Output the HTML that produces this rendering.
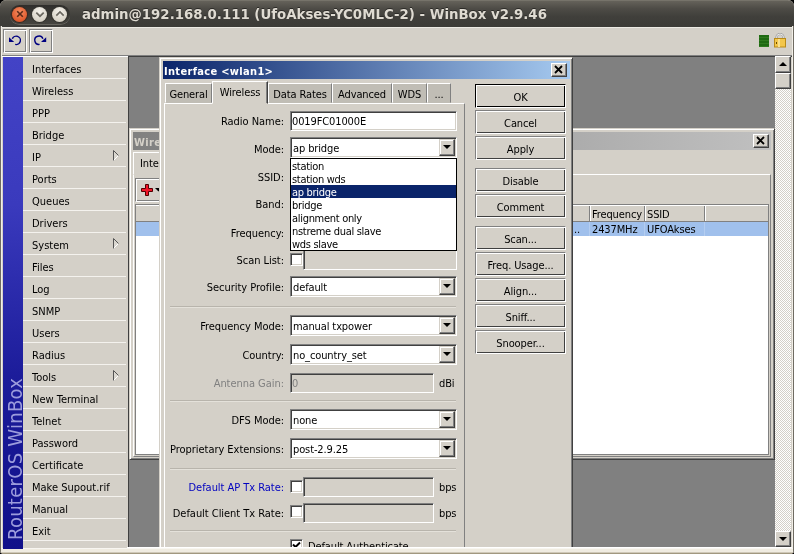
<!DOCTYPE html>
<html><head><meta charset="utf-8"><title>WinBox</title>
<style>
*{box-sizing:border-box;margin:0;padding:0}
html,body{width:794px;height:554px;overflow:hidden;background:#000}
#w{position:absolute;left:0;top:0;width:794px;height:554px;overflow:hidden;will-change:transform;border-radius:6px 6px 4px 4px;background:#d4d0c8}
body{position:relative;font-family:"DejaVu Sans Condensed","Liberation Sans",sans-serif;font-size:11px;color:#000;line-height:13px;letter-spacing:-0.12px}
.a{position:absolute}
.t{position:absolute;white-space:nowrap}
/* title bar */
#tb{left:0;top:0;width:794px;height:27px;background:linear-gradient(#65625a 0,#4d4b46 30%,#403f3b 60%,#3c3b37 100%);border-top:1px solid #76736a}
#tb .pill{left:10px;top:4px;width:60px;height:19px;border-radius:10px;background:linear-gradient(#2f2e2b,#45443f);box-shadow:0 1px 0 #66645d}
.wb{position:absolute;width:15px;height:15px;border-radius:50%;top:6px}
#tt{left:82px;top:5px;letter-spacing:0;font-family:"DejaVu Sans","Liberation Sans",sans-serif;font-weight:bold;font-size:13.33px;line-height:18px;color:#dfdbd2;text-shadow:0 -1px 0 #2b2a27}
/* generic win classic */
.btn{position:absolute;background:#d4d0c8;border:1px solid;border-color:#fff #404040 #404040 #fff;box-shadow:inset -1px -1px 0 #808080,inset 1px 1px 0 #d4d0c8;text-align:center}
.sunk{position:absolute;border:1px solid;border-color:#808080 #fff #fff #808080;box-shadow:inset 1px 1px 0 #404040,inset -1px -1px 0 #d4d0c8;background:#fff}
.sunk.dis{background:#d4d0c8}
.lbl{position:absolute;white-space:nowrap;text-align:right;width:140px;left:144px;letter-spacing:-0.04px;height:13px}
.dd{position:absolute;width:16px;height:17px;right:1px;top:1px;background:#d4d0c8;border:1px solid;border-color:#d4d0c8 #404040 #404040 #d4d0c8;box-shadow:inset -1px -1px 0 #808080,inset 1px 1px 0 #fff}
.dd:after{content:"";position:absolute;left:3px;top:5px;border:4px solid transparent;border-top:4px solid #000;border-bottom:0}
.val{position:absolute;left:2px;top:4px;white-space:nowrap}
.sep{position:absolute;left:170px;width:286px;height:2px;border-top:1px solid #b8b4ac;border-bottom:1px solid #e4e1da}
.cb{position:absolute;width:13px;height:13px;border:1px solid;border-color:#808080 #fff #fff #808080;box-shadow:inset 1px 1px 0 #404040,inset -1px -1px 0 #d4d0c8;background:#fff}
.mi{position:absolute;left:23px;width:103px;height:22px;border-bottom:1px solid #f4f2ee;padding:6px 0 0 9px;letter-spacing:0}
.arr{position:absolute;left:89px;top:5px;width:0;height:0;border:5px solid transparent;border-left:5px solid #fff;border-right:0}
.tab{position:absolute;top:83px;height:20px;background:#c0bdb5;border:1px solid;border-color:#fff #808080 transparent #fff;text-align:center;padding-top:4px}
.win{background:#d4d0c8;border:1px solid;border-color:#d4d0c8 #404040 #404040 #d4d0c8;box-shadow:inset 1px 1px 0 #fff,inset -1px -1px 0 #808080}
.hc{top:79px;height:15px;background:#808080;box-shadow:1px 0 0 #fff}
.eb{position:absolute;border:1px solid;border-color:#808080 #fff #fff #808080;box-shadow:inset 1px 1px 0 #fff,inset -1px -1px 0 #404040;text-align:center}
.eb.def{border-color:#000 #fff #fff #000;box-shadow:inset 1px 1px 0 #fff,inset -1px -1px 0 #000}
.tbb{position:absolute;border:1px solid;border-color:#808080 #fff #fff #808080;box-shadow:inset 1px 1px 0 #fff,inset -1px -1px 0 #808080}
</style></head><body><div id="w">

<!-- Title bar -->
<div id="tb" class="a">
  <div class="a pill"></div>
  <div class="wb" style="left:12px;background:radial-gradient(circle at 50% 35%,#f58d62,#df5a2d 70%,#b8441f);box-shadow:0 0 0 1px #3a2a22"></div>
  <div class="wb" style="left:32px;background:radial-gradient(circle at 50% 30%,#f4f1ea,#d7d2c6 75%,#b9b4a8);box-shadow:0 0 0 1px #35342f"></div>
  <div class="wb" style="left:52px;background:radial-gradient(circle at 50% 30%,#f4f1ea,#d7d2c6 75%,#b9b4a8);box-shadow:0 0 0 1px #35342f"></div>
  <svg class="a" style="left:0;top:-1px" width="80" height="26" viewBox="0 0 80 26">
    <path d="M17.2 11.2l5.6 5.6M22.8 11.2l-5.6 5.6" stroke="#5a2a18" stroke-width="1.6" fill="none"/>
    <path d="M36.3 12.6l3.7 3.6 3.7-3.6" stroke="#6a675f" stroke-width="1.7" fill="none"/>
    <path d="M56.3 15.6l3.7-3.6 3.7 3.6" stroke="#6a675f" stroke-width="1.7" fill="none"/>
  </svg>
  <div id="tt" class="t">admin@192.168.0.111 (UfoAkses-YC0MLC-2) - WinBox v2.9.46</div>
</div>

<div class="a" style="left:1px;top:27px;width:792px;height:1px;background:#eceae4"></div>
<!-- window side borders -->
<div class="a" style="left:0;top:26px;width:1px;height:528px;background:#6f6b62"></div>
<div class="a" style="left:1px;top:26px;width:1px;height:522px;background:#f2efe8"></div>
<div class="a" style="left:793px;top:26px;width:1px;height:528px;background:#6f6b62"></div>
<div class="a" style="left:792px;top:26px;width:1px;height:522px;background:#f2efe8"></div>

<!-- toolbar -->
<div class="tbb" style="left:3px;top:29px;width:24px;height:24px"></div>
<div class="tbb" style="left:29px;top:29px;width:24px;height:24px"></div>
<svg class="a" style="left:0;top:26px" width="60" height="30" viewBox="0 26 60 30">
  <g fill="none" stroke="#000080" stroke-width="1.4">
    <path d="M12.300 38.800A4.200 4.200 0 1 1 15.200 44.400"/>
    <path d="M42.900 38.800A4.200 4.200 0 1 0 39.600 44.400"/>
  </g>
  <path d="M9 37.300v4.700h5.200z" fill="#000080"/>
  <path d="M46.200 37.300v4.700h-5.200z" fill="#000080"/>
</svg>
<!-- status icons -->
<div class="a" style="left:759px;top:35px;width:10px;height:12px;background:repeating-linear-gradient(#1f6a12 0,#1f6a12 2px,#2f7a1e 2px,#2f7a1e 3px)"></div>
<svg class="a" style="left:773px;top:32px" width="14" height="16" viewBox="0 0 14 16">
  <path d="M3.500 7V5.500a3.500 3.500 0 0 1 7 0V7" fill="none" stroke="#9a9a9a" stroke-width="2.200"/>
  <path d="M3.500 7V5.500a3.500 3.500 0 0 1 7 0V7" fill="none" stroke="#f2f2f2" stroke-width="0.900"/>
  <rect x="1.500" y="6.500" width="11" height="8.500" fill="#f3c64a" stroke="#b88a18"/>
  <rect x="5" y="7" width="2" height="8" fill="#f9e08c"/>
  <rect x="3" y="10" width="1" height="2" fill="#6b4a00"/>
</svg>

<!-- MDI frame -->
<div class="a" style="left:2px;top:55px;width:790px;height:1px;background:#808080"></div>
<div class="a" style="left:128px;top:56px;width:664px;height:1px;background:#404040"></div>
<div class="a" style="left:2px;top:56px;width:126px;height:1px;background:#fff"></div>
<div class="a" style="left:128px;top:56px;width:1px;height:491px;background:#404040"></div>

<!-- sidebar -->
<div class="a" style="left:3px;top:57px;width:20px;height:492px;background:linear-gradient(#4343c6 0,#3a3abd 30%,#1c1c9a 65%,#10108a 100%);overflow:hidden">
  <div class="t" style="left:0;top:0;width:492px;height:20px;transform-origin:0 0;transform:translate(1.5px,492px) rotate(-90deg);font-family:'DejaVu Sans Condensed','Liberation Sans',sans-serif;font-size:20px;letter-spacing:0.28px;line-height:20px;color:#9c9cdc;padding-left:9px">RouterOS WinBox</div>
</div>
<div class="mi" style="top:57px">Interfaces</div>
<div class="mi" style="top:79px">Wireless</div>
<div class="mi" style="top:101px">PPP</div>
<div class="mi" style="top:123px">Bridge</div>
<div class="mi" style="top:145px">IP<svg class="a" style="left:89px;top:4px" width="8" height="12"><path d="M1.500 1.500L6.500 6.500L1.500 11.500z" fill="#dad7d0"/><path d="M1.500 11.500L6.500 6.500" stroke="#fff" stroke-width="1" fill="none"/><path d="M1.500 11.500V1.500L6.500 6.500" stroke="#555" stroke-width="1" fill="none"/></svg></div>
<div class="mi" style="top:167px">Ports</div>
<div class="mi" style="top:189px">Queues</div>
<div class="mi" style="top:211px">Drivers</div>
<div class="mi" style="top:233px">System<svg class="a" style="left:89px;top:4px" width="8" height="12"><path d="M1.500 1.500L6.500 6.500L1.500 11.500z" fill="#dad7d0"/><path d="M1.500 11.500L6.500 6.500" stroke="#fff" stroke-width="1" fill="none"/><path d="M1.500 11.500V1.500L6.500 6.500" stroke="#555" stroke-width="1" fill="none"/></svg></div>
<div class="mi" style="top:255px">Files</div>
<div class="mi" style="top:277px">Log</div>
<div class="mi" style="top:299px">SNMP</div>
<div class="mi" style="top:321px">Users</div>
<div class="mi" style="top:343px">Radius</div>
<div class="mi" style="top:365px">Tools<svg class="a" style="left:89px;top:4px" width="8" height="12"><path d="M1.500 1.500L6.500 6.500L1.500 11.500z" fill="#dad7d0"/><path d="M1.500 11.500L6.500 6.500" stroke="#fff" stroke-width="1" fill="none"/><path d="M1.500 11.500V1.500L6.500 6.500" stroke="#555" stroke-width="1" fill="none"/></svg></div>
<div class="mi" style="top:387px">New Terminal</div>
<div class="mi" style="top:409px">Telnet</div>
<div class="mi" style="top:431px">Password</div>
<div class="mi" style="top:453px">Certificate</div>
<div class="mi" style="top:475px">Make Supout.rif</div>
<div class="mi" style="top:497px">Manual</div>
<div class="mi" style="top:519px">Exit</div>

<!-- MDI area -->
<div class="a" id="mdi" style="left:129px;top:57px;width:646px;height:490px;background:#808080;overflow:hidden">
<div class="a" style="left:-129px;top:-57px;width:794px;height:700px">
<div class="a win" style="left:129px;top:128px;width:646px;height:332px"></div>
<div class="a" style="left:133px;top:132px;width:638px;height:18px;background:linear-gradient(90deg,#808080,#c0c0c0)"></div>
<div class="t" style="left:134px;top:136px;font-weight:bold;color:#d4d0c8;letter-spacing:0.32px">Wireless Tables</div>
<div class="btn" style="left:753px;top:134px;width:16px;height:14px"></div>
<svg class="a" style="left:753px;top:134px" width="16" height="14"><path d="M4 3l7 7M11 3l-7 7" stroke="#000" stroke-width="1.8" fill="none"/></svg>
<div class="a" style="left:133px;top:174px;width:638px;height:283px;border:1px solid;border-color:#fff #808080 #808080 #fff"></div>
<div class="a" style="left:133px;top:152px;width:66px;height:23px;background:#d4d0c8;border:1px solid;border-color:#fff #404040 transparent #fff"></div>
<div class="t" style="left:140px;top:157px">Interfaces</div>
<div class="tbb" style="left:135px;top:178px;width:38px;height:24px"></div>
<svg class="a" style="left:141px;top:184px" width="22" height="12"><path d="M4.500 0.500h3v4h4v3h-4v4h-3v-4h-4v-3h4z" fill="#f01428" stroke="#500000" stroke-width="1"/><path d="M14 4h7l-3.500 3.500z" fill="#000"/></svg>
<div class="a" style="left:135px;top:204px;width:634px;height:251px;background:#fff;border:1px solid #808080"></div>
<div class="a" style="left:136px;top:205px;width:632px;height:17px;background:#d4d0c8;border-top:1px solid #fff;border-bottom:1px solid #808080"></div>
<div class="a" style="left:136px;top:222px;width:632px;height:14px;background:#a0c0ec"></div>
<div class="a" style="left:589px;top:206px;width:2px;height:15px;background:#808080;border-right:1px solid #fff"></div>
<div class="a" style="left:589px;top:222px;width:1px;height:14px;background:#b4cdf0"></div>
<div class="a" style="left:644px;top:206px;width:2px;height:15px;background:#808080;border-right:1px solid #fff"></div>
<div class="a" style="left:644px;top:222px;width:1px;height:14px;background:#b4cdf0"></div>
<div class="a" style="left:704px;top:206px;width:2px;height:15px;background:#808080;border-right:1px solid #fff"></div>
<div class="a" style="left:704px;top:222px;width:1px;height:14px;background:#b4cdf0"></div>
<div class="t" style="left:592px;top:208px">Frequency</div>
<div class="t" style="left:647px;top:208px">SSID</div>
<div class="t" style="left:574px;top:223px">..</div>
<div class="t" style="left:592px;top:223px">2437MHz</div>
<div class="t" style="left:647px;top:223px">UFOAkses</div>
<div class="a win" style="left:159px;top:57px;width:414px;height:620px">
 <div class="a" style="left:3px;top:3px;width:407px;height:18px;background:linear-gradient(90deg,#0a246a,#a6caf0)"></div>
 <div class="t" style="left:4px;top:7px;font-weight:bold;color:#fff;letter-spacing:0.32px">Interface &lt;wlan1&gt;</div>
 <div class="btn" style="left:391px;top:5px;width:16px;height:14px"></div>
 <svg class="a" style="left:391px;top:5px" width="16" height="14"><path d="M4 3l7 7M11 3l-7 7" stroke="#000" stroke-width="1.8" fill="none"/></svg>
</div>
<div class="a" style="left:164px;top:103px;width:301px;height:560px;border:1px solid;border-color:#fff #808080 #808080 #fff"></div>
<div class="tab" style="left:165px;width:47px">General</div>
<div class="tab" style="left:268px;width:64px">Data Rates</div>
<div class="tab" style="left:332px;width:60px">Advanced</div>
<div class="tab" style="left:392px;width:35px">WDS</div>
<div class="tab" style="left:427px;width:24px">...</div>
<div class="a" style="left:212px;top:81px;width:56px;height:23px;background:#d4d0c8;border:1px solid;border-color:#fff #404040 transparent #fff;box-shadow:inset -1px 0 0 #808080;text-align:center;padding-top:4px">Wireless</div>
<div class="lbl" style="top:115px;color:#000">Radio Name:</div>
<div class="sunk" style="left:290px;top:111px;width:167px;height:20px"><span class="val" style="left:1px;top:3px;color:#000">0019FC01000E</span></div>
<div class="lbl" style="top:143px;color:#000">Mode:</div>
<div class="sunk" style="left:290px;top:137px;width:167px;height:21px"><span class="val">ap bridge</span><i class="dd"></i></div>
<div class="lbl" style="top:171px;color:#000">SSID:</div>
<div class="lbl" style="top:198px;color:#000">Band:</div>
<div class="lbl" style="top:227px;color:#000">Frequency:</div>
<div class="lbl" style="top:254px;color:#000">Scan List:</div>
<div class="cb" style="left:290px;top:253px"></div>
<div class="sunk dis" style="left:303px;top:249px;width:154px;height:21px"><span class="val" style="left:1px;top:3px;color:#000"></span></div>
<div class="lbl" style="top:281px;color:#000">Security Profile:</div>
<div class="sunk" style="left:290px;top:276px;width:167px;height:21px"><span class="val">default</span><i class="dd"></i></div>
<div class="sep" style="top:306px"></div>
<div class="lbl" style="top:320px;color:#000">Frequency Mode:</div>
<div class="sunk" style="left:290px;top:315px;width:167px;height:21px"><span class="val">manual txpower</span><i class="dd"></i></div>
<div class="lbl" style="top:349px;color:#000">Country:</div>
<div class="sunk" style="left:290px;top:344px;width:167px;height:21px"><span class="val">no_country_set</span><i class="dd"></i></div>
<div class="lbl" style="top:377px;color:#808080">Antenna Gain:</div>
<div class="sunk dis" style="left:290px;top:373px;width:144px;height:20px"><span class="val" style="left:1px;top:3px;color:#808080">0</span></div>
<div class="t" style="left:439px;top:377px">dBi</div>
<div class="sep" style="top:400px"></div>
<div class="lbl" style="top:414px;color:#000">DFS Mode:</div>
<div class="sunk" style="left:290px;top:409px;width:167px;height:21px"><span class="val">none</span><i class="dd"></i></div>
<div class="lbl" style="top:443px;color:#000">Proprietary Extensions:</div>
<div class="sunk" style="left:290px;top:438px;width:167px;height:21px"><span class="val">post-2.9.25</span><i class="dd"></i></div>
<div class="sep" style="top:468px"></div>
<div class="lbl" style="top:481px;color:#0000c0">Default AP Tx Rate:</div>
<div class="cb" style="left:290px;top:480px"></div>
<div class="sunk dis" style="left:303px;top:477px;width:131px;height:20px"><span class="val" style="left:1px;top:3px;color:#000"></span></div>
<div class="t" style="left:439px;top:481px">bps</div>
<div class="lbl" style="top:507px;color:#000">Default Client Tx Rate:</div>
<div class="cb" style="left:290px;top:505px"></div>
<div class="sunk dis" style="left:303px;top:503px;width:131px;height:20px"><span class="val" style="left:1px;top:3px;color:#000"></span></div>
<div class="t" style="left:439px;top:507px">bps</div>
<div class="sep" style="top:530px"></div>
<div class="cb" style="left:290px;top:539px"><svg class="a" style="left:1px;top:1px" width="9" height="9"><path d="M1 3.5l2.5 2.5 4.5-4.500" stroke="#000" stroke-width="2" fill="none"/></svg></div>
<div class="t" style="left:308px;top:540px">Default Authenticate</div>
<div class="a" style="left:290px;top:158px;width:167px;height:93px;background:#fff;border:1px solid #000"></div>
<div class="a" style="left:291px;top:159px;width:165px;height:13px;padding:1px 0 0 1px;overflow:hidden;letter-spacing:-0.3px">station</div>
<div class="a" style="left:291px;top:172px;width:165px;height:13px;padding:1px 0 0 1px;overflow:hidden;letter-spacing:-0.3px">station wds</div>
<div class="a" style="left:291px;top:185px;width:165px;height:13px;background:#0a246a;color:#fff;padding:1px 0 0 1px;overflow:hidden;letter-spacing:-0.3px">ap bridge</div>
<div class="a" style="left:291px;top:198px;width:165px;height:13px;padding:1px 0 0 1px;overflow:hidden;letter-spacing:-0.3px">bridge</div>
<div class="a" style="left:291px;top:211px;width:165px;height:13px;padding:1px 0 0 1px;overflow:hidden;letter-spacing:-0.3px">alignment only</div>
<div class="a" style="left:291px;top:224px;width:165px;height:13px;padding:1px 0 0 1px;overflow:hidden;letter-spacing:-0.3px">nstreme dual slave</div>
<div class="a" style="left:291px;top:237px;width:165px;height:13px;padding:1px 0 0 1px;overflow:hidden;letter-spacing:-0.3px">wds slave</div>
<div class="eb def" style="left:475px;top:84px;width:91px;height:24px;padding-top:6px">OK</div>
<div class="eb" style="left:475px;top:110px;width:91px;height:24px;padding-top:6px">Cancel</div>
<div class="eb" style="left:475px;top:136px;width:91px;height:24px;padding-top:6px">Apply</div>
<div class="eb" style="left:475px;top:168px;width:91px;height:24px;padding-top:6px">Disable</div>
<div class="eb" style="left:475px;top:194px;width:91px;height:24px;padding-top:6px">Comment</div>
<div class="eb" style="left:475px;top:226px;width:91px;height:24px;padding-top:6px">Scan...</div>
<div class="eb" style="left:475px;top:252px;width:91px;height:24px;padding-top:6px">Freq. Usage...</div>
<div class="eb" style="left:475px;top:278px;width:91px;height:24px;padding-top:6px">Align...</div>
<div class="eb" style="left:475px;top:304px;width:91px;height:24px;padding-top:6px">Sniff...</div>
<div class="eb" style="left:475px;top:330px;width:91px;height:24px;padding-top:6px">Snooper...</div>
</div>
</div>

<!-- scrollbar -->
<div class="a" style="left:775px;top:57px;width:16px;height:490px;background:repeating-conic-gradient(#fff 0 25%,#d4d0c8 0 50%) 0 0/2px 2px"></div>
<div class="btn" style="left:775px;top:56px;width:16px;height:17px"></div>
<div class="btn" style="left:775px;top:73px;width:16px;height:16px"></div>
<div class="btn" style="left:775px;top:531px;width:16px;height:16px"></div>
<svg class="a" style="left:775px;top:56px" width="16" height="16"><path d="M4 10l4-4 4 4z" fill="#000"/></svg>
<svg class="a" style="left:775px;top:531px" width="16" height="16"><path d="M4 6l4 4 4-4z" fill="#000"/></svg>

<!-- bottom -->
<div class="a" style="left:2px;top:547px;width:790px;height:1px;background:#d4d0c8"></div>
<div class="a" style="left:127px;top:547px;width:665px;height:1px;background:#fff"></div>
<div class="a" style="left:1px;top:548px;width:792px;height:1px;background:#f8f6f1"></div>
<div class="a" style="left:1px;top:549px;width:792px;height:3px;background:#f0ece1"></div>
<div class="a" style="left:0;top:552px;width:794px;height:1px;background:#cfc8b8"></div>
<div class="a" style="left:0;top:553px;width:794px;height:1px;background:#a1987f"></div>
<div class="a" style="left:3px;top:547px;width:20px;height:2px;background:#10108a"></div>

</div></body></html>
